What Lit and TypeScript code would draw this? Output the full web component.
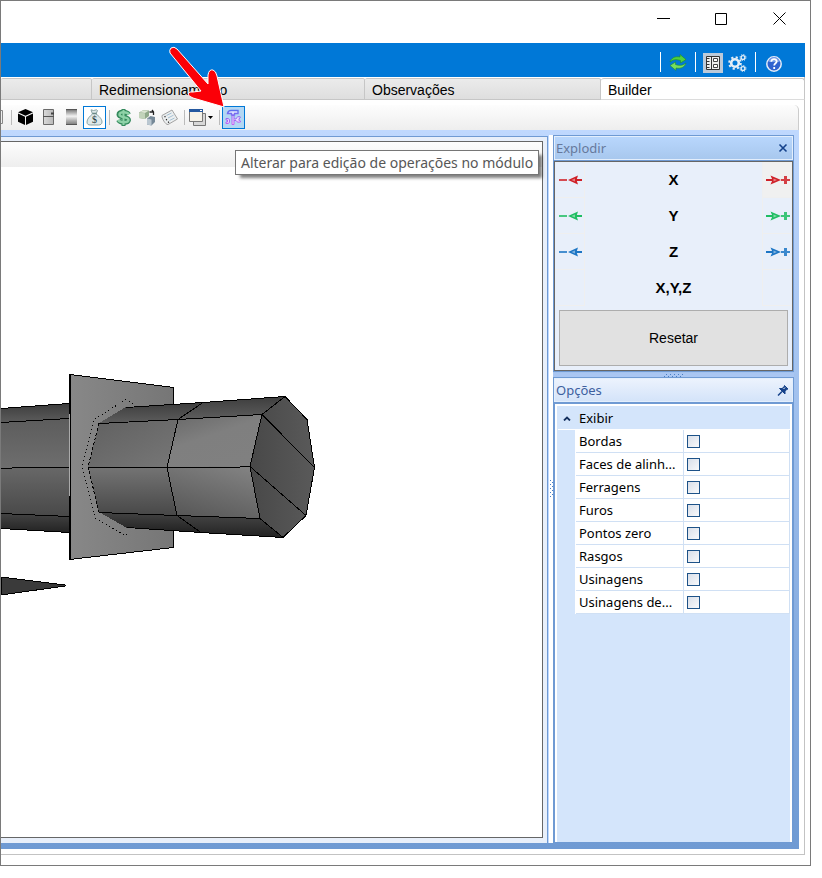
import { LitElement, html, css, svg } from "lit";
import { customElement } from "lit/decorators.js";

/** 3D preview of the module: a faceted bar passing through a plate. */
@customElement("model-view")
class ModelView extends LitElement {
  static styles = css`
    :host {
      display: block;
    }
    svg {
      display: block;
    }
    .edge {
      fill: none;
      stroke: #000;
    }
    .hidden {
      fill: none;
      stroke: #000;
      stroke-dasharray: 1 3;
    }
  `;

  render() {
    return html`
      <svg width="330" height="240" viewBox="1 367 330 240" role="img" aria-label="Modelo 3D" shape-rendering="crispEdges">
        <defs>
          <linearGradient id="plate"><stop offset="0" stop-color="#888" /><stop offset="1" stop-color="#767676" /></linearGradient>
          <linearGradient id="dark" x1="0" y1="0" x2="0" y2="1"><stop offset="0" stop-color="#3c3c3c" /><stop offset="1" stop-color="#5d5d5d" /></linearGradient>
          <linearGradient id="under" x1="0" y1="0" x2="0" y2="1"><stop offset="0" stop-color="#444" /><stop offset="1" stop-color="#222" /></linearGradient>
          <linearGradient id="rear" x1="0" y1="0" x2="0" y2="1"><stop offset="0" stop-color="#5c5c5c" /><stop offset="1" stop-color="#6e6e6e" /></linearGradient>
          <linearGradient id="rearLow" x1="0" y1="0" x2="0" y2="1"><stop offset="0" stop-color="#686868" /><stop offset="1" stop-color="#484848" /></linearGradient>
          <linearGradient id="upper" x1="0" y1="0" x2="1" y2="1"><stop offset="0" stop-color="#606060" /><stop offset="1" stop-color="#777" /></linearGradient>
          <linearGradient id="lower" x1="0" y1="0" x2="0" y2="1"><stop offset="0" stop-color="#747474" /><stop offset="1" stop-color="#484848" /></linearGradient>
          <linearGradient id="tipUp" x1="0" y1="0" x2="0.6" y2="1"><stop offset="0" stop-color="#676767" /><stop offset="0.5" stop-color="#7f7f7f" /><stop offset="1" stop-color="#808080" /></linearGradient>
          <linearGradient id="tipLow" x1="0.3" y1="1" x2="0.8" y2="0"><stop offset="0" stop-color="#585858" /><stop offset="1" stop-color="#828282" /></linearGradient>
          <linearGradient id="face"><stop offset="0" stop-color="#484848" /><stop offset="1" stop-color="#5a5a5a" /></linearGradient>
        </defs>
        <polygon fill="url(#dark)" points="1,408 69,403 69,418 1,423" />
        <polygon fill="url(#rear)" points="1,423 69,418 69,468 1,468" />
        <polygon fill="url(#rearLow)" points="1,468 69,467 69,517 1,513" />
        <polygon fill="url(#under)" points="1,513 69,517 69,533 1,528" />
        <path class="edge" d="M1 408.5 69 403.5M1 422.5 69 418.5M1 468.5 23 467.5H69M1 513.5 69 516.5M1 528.5 69 532.5" />
        <polygon fill="url(#plate)" points="70,374 173,387 173,548 69,560" />
        <path class="edge" d="M69.5 560V374.5L173.5 387.5V547.5L69.5 559.5" />
        <path d="M69 374h2v186h-2z" />
        <path d="M69 414h1v82h-1z" fill="#aaa" />
        <polygon fill="url(#dark)" points="126,407 203,402 178,419 99,423" />
        <polygon fill="url(#dark)" points="203,402 285,396 262,414 178,419" />
        <polygon fill="url(#upper)" points="99,423 178,419 167,467 88,467" />
        <polygon fill="url(#lower)" points="88,467 167,467 177,515 99,512" />
        <polygon fill="url(#tipUp)" points="178,419 262,414 250,466 167,467" />
        <polygon fill="url(#tipLow)" points="167,467 250,466 260,519 177,515" />
        <polygon fill="url(#under)" points="99,512 177,515 201,532 127,528" />
        <polygon fill="url(#under)" points="177,515 260,519 283,537 201,532" />
        <polygon fill="url(#face)" points="285,396 307,419 315,467 306,515 283,537 260,519 250,466 262,414" />
        <path class="edge" d="M126 407.5 203 402.5 285 396.5 307 419.5 314.5 467.5 306 515.5 283 537.5 201 532.5 127 527.5M99 423.5 178 419.5 262 414.5M88 467.5H230L250 466.5M99 512.5 177 515.5 260 518.5M203 402.5 178 419.5 167 467.5 177 515.5 201 532.5M285 396.5 262 414.5 250 466.5 260 518.5 283 537.5M262 414.5 314.5 467.5M250 466.5 306 515.5" />
        <path class="hidden" d="M133 404 126 399.5 94.5 419 82 467 95 518 125 535.5 133 530" />
        <path class="edge" stroke-dasharray="3 2" d="M99 423 88 467 99 512" />
        <polygon points="1,577 65,585 65,586 1,595" fill="#3a3a3a" stroke="#000" />
      </svg>
    `;
  }
}

/** Arrow used by the explode controls; points left for "in", right for "out". */
@customElement("explode-icon")
class ExplodeIcon extends LitElement {
  static properties = { out: { type: Boolean }, tone: {} };
  declare out: boolean;
  declare tone: string;

  static styles = css`
    :host {
      display: block;
      width: 25px;
      height: 13px;
    }
    svg {
      display: block;
    }
    .red {
      color: #cf2027;
    }
    .green {
      color: #1fbd62;
    }
    .blue {
      color: #1c75c4;
    }
  `;

  render() {
    const shape = this.out
      ? svg`<path d="M1 6h7v2H1z" /><path d="M5.500 2.500 16 7 5.500 11.500 7.500 7z" /><path d="M16 6h3V3h3v3h3v2h-3v3h-3V8h-3z" opacity=".85" /><path d="M8.500 5.500 12 7 8.500 8.500z" fill="#fff" opacity=".45" />`
      : svg`<path d="M2 6h8v2H2z" opacity=".8" /><path d="M18 6h7v2h-7z" /><path d="M21 2.500 11 7l10 4.500L19.500 7z" /><path d="M18 5.500 14.500 7 18 8.500z" fill="#fff" opacity=".45" />`;
    return html`<svg class=${this.tone} width="25" height="13" viewBox="0 0 25 13" fill="currentColor">${shape}</svg>`;
  }
}

const ICONS = {
  cube: svg`<path d="M8.500 0 16 3.300 8.500 6.800 1 3.300z" /><path d="M1 4.500 8 7.800V16L1 12.800z" /><path d="M16 4.500 9 7.800V16L16 12.800z" />`,
  cabinet: svg`<defs><linearGradient id="door"><stop offset="0" stop-color="#dadada" /><stop offset="1" stop-color="#b8b8b8" /></linearGradient></defs><path d="M3.500.5h10v15h-10z" fill="url(#door)" stroke="#6a6a6a" /><path d="M3 7.500h11" stroke="#555" /><path d="M11 4.500h3" stroke="#444" stroke-width="2" />`,
  metal: svg`<defs><linearGradient id="metal" x1="0" y1="0" x2="0" y2="1"><stop offset="0" stop-color="#666" /><stop offset=".15" stop-color="#999" /><stop offset=".45" stop-color="#f2f2f2" /><stop offset=".75" stop-color="#aaa" /><stop offset="1" stop-color="#777" /></linearGradient></defs><path d="M3 0h11v16H3z" fill="url(#metal)" /><path d="M3 .5h11M3 15.500h11" stroke="#555" />`,
  bag: svg`<path d="M5 .8 7.500 1.500 10.500.8 11.500 1.500 10 5C13 7 16 10 16 13c0 2-1.500 3-3.500 3H4.500C2 16 1 15 1 13 1 10 3.500 7.500 6.500 5z" fill="#dfe9ea" stroke="#8aa3a3" /><path d="M6.500 4.500h4" stroke="#6a8a86" stroke-width="1.500" /><text x="8.500" y="14" text-anchor="middle" font-family="Liberation Serif, serif" font-size="10" fill="#243c3a">$</text>`,
  dollar: svg`<path d="M13.500 5.500C12 2.500 4 2.500 4 5.800 4 8.800 13.500 7.500 13.500 11 13 14.500 5 14 3.500 11" fill="none" stroke="#348a5d" stroke-width="5" /><path d="M8.500 0v17" stroke="#348a5d" stroke-width="4" /><path d="M14 5.500C12 2.500 4.500 2.500 4.500 5.800 4.500 8.800 13.500 7.500 13.500 11 13 14 5.500 14 3 11" fill="none" stroke="#8ed2a7" stroke-width="2.400" /><path d="M8.500 1v15" stroke="#8ed2a7" stroke-width="2" />`,
  parts: svg`<path d="M1 3.500 5.500 1 11 1.500V7l-4 3-6-1z" fill="#90a98b" /><path d="M1 3.500 7 4.200V10L1 9z" fill="#c2d3ba" /><path d="M1.500 3.300 5.500 1.300 10.500 1.700 7 4z" fill="#dce6d3" /><path d="M9 9.500 12.500 7 17 8v5l-3.500 3.500L9 15.500z" fill="#768998" /><path d="M9 9.500l4.500 1v6L9 15.500z" fill="#bac7d1" /><path d="M11.500 3h4M14 1l1.500 2v3" fill="none" stroke="#222" stroke-width="1.300" />`,
  list: svg`<path d="M1 6.500 11 1 16.500 10 7 15.500C4.500 16 .5 9 1 6.500z" fill="#eceff0" stroke="#a2a2a2" /><path d="M5.500 6.500 10.500 4M7 9 12.500 6.200M8.500 11.500 13.500 9" stroke="#a5c0d3" /><path d="M3.500 8 4.500 7.400M5 11l1-.6M7 13.500l1-.6" stroke="#222" stroke-width="1.300" />`,
  windows: svg`<path d="M4.500 4.500h12v12h-12z" fill="#d8d8d8" stroke="#777" /><path d="M.5.5h13v12H.5z" fill="#f5f2e9" stroke="#777" /><path d="M0 0h14v3H0z" fill="#24589f" /><path d="M11 1.500h2" stroke="#fff" />`,
  tools: svg`<defs><linearGradient id="violet" x1="0" y1="0" x2="0" y2="17" gradientUnits="userSpaceOnUse"><stop offset="0" stop-color="#5471ee" /><stop offset="1" stop-color="#d05ff5" /></linearGradient></defs><g fill="none" stroke="url(#violet)"><path d="M2.500 4.500C3 2 4 1.500 6 1.500h7v3H9.500V6h-3V4.500z" fill="#e3e8ff" stroke-width="1.400" /><path d="M7 6.500v9h2v-9z" fill="#efd8ff" /><path d="M1 9.500h2l1.500 1v3l-1.500 1H1v-1.500h1.500v-2H1z" fill="#ead9ff" /><path d="M9 10h2c.5-2 2.500-3 4.500-2l-1.500 2v1.500l2 1c-2 1.500-4.500.5-5-1H9" fill="#ead9ff" /></g>`,
  refresh: svg`<path d="M2 9C3 5 7 3 12 4V1.500L18 6.500 12.500 10V7.500C8 6 5 6.500 2 9z" fill="#4fd13f" stroke="#1e8a2c" stroke-width=".6" /><path d="M18 10c-1 4-5 6-10 5v2.500L2 12.500 7.500 9v2.500C12 13 15 12.500 18 10z" fill="#76df5d" stroke="#1e8a2c" stroke-width=".6" />`,
  panel: svg`<path d="M3.500 3.500h13v13h-13z" fill="#eee" stroke="#333" /><path d="M8.500 3v14" stroke="#333" /><path d="M4 5.500h2.500M4 8.500h2.500M4 11.500h2.500M4 14.500h2.500" stroke="#333" /><path d="M10.500 5.500h4v3h-4zM10.500 11.500h4v3h-4z" fill="#fff" stroke="#444" />`,
  gears: svg`<g fill="none" stroke="#e4eef7"><circle cx="7" cy="10" r="3.800" stroke-width="2.600" /><circle cx="7" cy="10" r="5.800" stroke-width="2" stroke-dasharray="2.200 2.350" /><circle cx="15" cy="4.500" r="1.900" stroke-width="1.400" /><circle cx="15" cy="4.500" r="3" stroke-width="1" stroke-dasharray="1.200 1.150" /><circle cx="15" cy="15.500" r="1.900" stroke-width="1.400" /><circle cx="15" cy="15.500" r="3" stroke-width="1" stroke-dasharray="1.200 1.150" /></g>`,
  help: svg`<circle cx="11" cy="11" r="7.200" fill="#2f62cf" stroke="#e5edf8" stroke-width="1.500" /><path d="M5.500 9a5.500 5 0 0 1 11 0z" fill="#719be8" /><path d="M8.300 8.800c0-3.800 5.600-3.400 5.400-.3-.1 1.700-2.500 1.800-2.500 3.900M11.200 14v2" fill="none" stroke="#fff" stroke-width="1.800" />`,
  pin: svg`<path d="M7.500 1.500 11 5 9.500 5.500 8 7.500V10L2.500 4.500H5L7 3z" fill="#15428b" stroke="#15428b" /><path d="M1 11.500l4-4" stroke="#15428b" stroke-width="1.500" /><path d="M6.500 5 8 3.500" stroke="#fff" />`,
};

@customElement("app-root")
class AppRoot extends LitElement {
  static styles = css`
    :host {
      display: block;
      box-sizing: border-box;
      height: 100vh;
      padding: 0 11px 12px 0;
      background: #fff;
      color: #000;
      font: 14px/16px "Liberation Sans", Arial, sans-serif;
    }
    * {
      box-sizing: border-box;
    }
    button {
      display: flex;
      align-items: center;
      justify-content: center;
      margin: 0;
      padding: 0;
      border: 0;
      border-radius: 0;
      background: none;
      color: inherit;
      font: inherit;
    }
    svg {
      display: block;
      flex: none;
    }
    .window {
      display: flex;
      flex-direction: column;
      height: 100%;
      border: 1px solid #7a7a7a;
      overflow: hidden;
    }
    .titlebar {
      display: flex;
      flex: none;
      justify-content: flex-end;
      height: 42px;
      padding-right: 2px;
    }
    .titlebar button {
      width: 58px;
      height: 35px;
    }
    .titlebar path {
      fill: none;
      stroke: #000;
    }
    .band {
      display: flex;
      flex: none;
      align-items: center;
      justify-content: flex-end;
      gap: 7px;
      height: 34px;
      margin-right: 5px;
      padding: 6px 22px 0 0;
      background: #0078d7;
    }
    .band .rule {
      width: 1px;
      height: 20px;
      margin-bottom: 2px;
      background: #fff;
    }
    .pair {
      display: flex;
      gap: 5px;
    }
    .pressed {
      background: #bccad9;
    }
    .page {
      display: flex;
      flex: 1;
      flex-direction: column;
      min-height: 0;
      margin: 0 5px 10px 0;
      padding: 0 5px 5px 0;
      border: solid #c3c3c3;
      border-width: 0 1px 1px 0;
    }
    .tabs {
      display: grid;
      flex: none;
      grid-template-columns: 91fr 273fr 236fr 204fr;
      height: 23px;
      margin: 0 -6px 5px 0;
      padding-top: 1px;
    }
    .tabs button {
      justify-content: flex-start;
      padding: 2px 0 0 7px;
      border: 1px solid #c6c6c6;
      border-left-width: 0;
      background: linear-gradient(#ebebeb, #dedede);
      border-radius: 2px 2px 0 0;
    }
    .tabs button.selected {
      border-color: #c6c6c6 #c6c6c6 #dcdcdc;
      border-radius: 3px 3px 0 0;
      background: #fff;
    }
    .toolbar {
      display: flex;
      flex: none;
      align-items: center;
      height: 25px;
      border-right: 1px solid #ccc;
      border-radius: 0 5px 0 0;
      background: linear-gradient(#fdfdfd, #eeeeee);
    }
    .toolbar button {
      width: 23px;
      height: 23px;
    }
    .toolbar .clipped {
      width: 7px;
      justify-content: flex-start;
    }
    .toolbar .menu {
      width: 28px;
      gap: 2px;
      margin-right: 1px;
    }
    .toolbar .rule {
      width: 1px;
      height: 15px;
      margin: 0 2px 0 3px;
      background: #bbb;
    }
    .toolbar .boxed {
      border: 1px solid #0078d7;
      background: #fff;
    }
    .toolbar .active {
      border: 1px solid #0078d7;
      background: #b3d7f3;
    }
    .anchor {
      position: relative;
      z-index: 1;
    }
    .pointer {
      position: absolute;
      right: 18px;
      bottom: 20px;
      pointer-events: none;
    }
    .tooltip {
      position: absolute;
      top: 44px;
      left: 13px;
      width: max-content;
      padding: 0 5px;
      border: 1px solid #767676;
      background: #fff;
      box-shadow: 4px 4px 3px -1px rgba(0, 0, 0, 0.5);
      color: #575757;
      font: 14px/23px "Noto Sans", "Open Sans", sans-serif;
    }
    .dock {
      display: flex;
      flex: 1;
      min-height: 0;
      padding: 5px 5px 6px 0;
      background: linear-gradient(#bfd8fe, #6f9ad3);
    }
    .document {
      display: flex;
      flex: 1;
      min-width: 0;
      margin-top: 1px;
      padding: 4px 4px 5px 0;
      border: solid #6f9ad3;
      border-width: 1px 1px 0 0;
      background: #e8effa;
    }
    .canvas {
      flex: 1;
      overflow: hidden;
      border: solid #666;
      border-width: 1px 1px 1px 0;
      background: #fff;
    }
    .viewbar {
      height: 25px;
      margin-bottom: 200px;
      background: linear-gradient(#fdfdfd, #eeeeee);
    }
    .splitter {
      display: flex;
      align-items: center;
      justify-content: center;
      width: 5px;
      border-left: 1px solid #bfd8fe;
      background: #fff;
    }
    .side {
      display: flex;
      flex-direction: column;
      width: 241px;
    }
    .caption {
      display: flex;
      flex: none;
      align-items: center;
      justify-content: space-between;
      height: 26px;
      margin: 0;
      padding: 0 4px 0 2px;
      border: 1px solid #6f9ad3;
      box-shadow: inset 0 0 0 1px #e3eefc;
      background: linear-gradient(#b9d7fd, #a7c7ed);
      color: #66799c;
      font: 13px/18px "Noto Sans", "Open Sans", sans-serif;
    }
    .caption.active {
      background: linear-gradient(#edf3fd, #d3e3f9);
      color: #3d5f9f;
    }
    .caption button {
      width: 12px;
      height: 12px;
    }
    .explode {
      display: flex;
      flex: none;
      flex-direction: column;
      gap: 4px;
      padding-bottom: 4px;
      outline: 1px solid #6f9ad3;
      border: 1px solid #666;
      margin: 0 1px 2px;
      background: #e8effa;
    }
    .axis {
      display: grid;
      grid-template-columns: 30px 1fr 30px;
      align-items: center;
      height: 36px;
      font-size: 15px;
      font-weight: bold;
      text-align: center;
    }
    .axis button {
      width: 30px;
      height: 36px;
      border: solid #efefef;
      border-width: 0 1px 1px 0;
    }
    .axis button:last-child {
      border-width: 0 0 1px 1px;
    }
    .axis button.hot {
      background: #f0f0f0;
    }
    .reset {
      height: 56px;
      margin: 0 4px;
      border: 1px solid #adadad;
      background: #e1e1e1;
    }
    .divider {
      display: flex;
      flex: none;
      align-items: center;
      justify-content: center;
      height: 4px;
      background: #a9c6f2;
    }
    .options {
      flex: 1;
      min-height: 0;
      overflow: hidden;
      border: solid #6f9ad3;
      border-width: 1px 2px;
      padding: 2px 2px 0;
      background: #fff;
    }
    .sheet {
      height: 100%;
      padding: 1px 0 0 1px;
      background: #d4e5fb;
    }
    table {
      width: 100%;
      border-collapse: separate;
      border-spacing: 0;
      table-layout: fixed;
      font: 13px/18px "Noto Sans", "Open Sans", sans-serif;
    }
    .indent {
      width: 18px;
    }
    .name {
      width: 108px;
    }
    th,
    td {
      height: 23px;
      padding: 0;
      font-weight: normal;
      text-align: left;
      white-space: nowrap;
    }
    tbody th,
    tbody .value {
      padding-left: 3px;
      border: solid #d0e0f4;
      border-width: 0 1px 1px 0;
      background: #fff;
    }
    tbody .gutter {
      border-right: 1px solid #fff;
    }
    thead th {
      border-bottom: 1px solid #fff;
    }
    thead .group {
      padding-left: 3px;
    }
    thead button {
      width: 18px;
      height: 18px;
    }
    input {
      display: block;
      width: 13px;
      height: 13px;
      margin: 0;
      border: 1px solid #1d5288;
      background: linear-gradient(135deg, #d9dfe9, #f8f9fb);
      appearance: none;
    }
    input:checked {
      background: #1d5288;
    }
  `;

  private icon(name: keyof typeof ICONS, size = 17) {
    return html`<svg width=${size} height=${size} viewBox="0 0 ${size} ${size}">${ICONS[name]}</svg>`;
  }

  private axis(label: string, tone: string) {
    return html`
      <div class="axis">
        <button aria-label="Aproximar ${label}">${tone ? html`<explode-icon .tone=${tone}></explode-icon>` : ""}</button>
        <span>${label}</span>
        <button class=${tone === "red" ? "hot" : ""} aria-label="Afastar ${label}">
          ${tone ? html`<explode-icon .tone=${tone} .out=${true}></explode-icon>` : ""}
        </button>
      </div>
    `;
  }

  private option(label: string, i: number) {
    return html`
      <tr>
        <td class="gutter"></td>
        <th scope="row"><label for="option-${i}">${label}</label></th>
        <td class="value"><input type="checkbox" id="option-${i}" /></td>
      </tr>
    `;
  }

  render() {
    const options = ["Bordas", "Faces de alinh...", "Ferragens", "Furos", "Pontos zero", "Rasgos", "Usinagens", "Usinagens de..."];
    return html`
      <div class="window">
        <header class="titlebar">
          <button aria-label="Minimizar"><svg width="13" height="13"><path d="M0 6.500h13" /></svg></button>
          <button aria-label="Maximizar"><svg width="13" height="13"><path d="M.5 1.500h11v11H.5z" /></svg></button>
          <button aria-label="Fechar"><svg width="13" height="13"><path d="M.5.5l12 12M12.500.5l-12 12" /></svg></button>
        </header>
        <div class="band">
          <span class="rule"></span>
          <button aria-label="Atualizar">${this.icon("refresh", 20)}</button>
          <span class="rule"></span>
          <div class="pair">
            <button class="pressed" aria-label="Painel">${this.icon("panel", 20)}</button>
            <button aria-label="Configurações">${this.icon("gears", 20)}</button>
          </div>
          <span class="rule"></span>
          <button aria-label="Ajuda">${this.icon("help", 20)}</button>
        </div>
        <main class="page">
          <nav class="tabs" role="tablist">
            <button role="tab" aria-label="Anterior"></button>
            <button role="tab">Redimensionamento</button>
            <button role="tab">Observações</button>
            <button role="tab" class="selected" aria-selected="true">Builder</button>
          </nav>
          <div class="toolbar" role="toolbar">
            <button class="clipped" aria-label="Vista">
              <svg width="3" height="15"><path d="M0 .5h1.500v13H0" fill="#eee" stroke="#888" /></svg>
            </button>
            <span class="rule"></span>
            <button aria-label="Sólido">${this.icon("cube")}</button>
            <button aria-label="Armário">${this.icon("cabinet")}</button>
            <button aria-label="Material">${this.icon("metal")}</button>
            <button class="boxed" aria-label="Orçamento">${this.icon("bag")}</button>
            <span class="rule"></span>
            <button aria-label="Preço">${this.icon("dollar")}</button>
            <button aria-label="Peças">${this.icon("parts")}</button>
            <button aria-label="Lista">${this.icon("list")}</button>
            <span class="rule"></span>
            <button class="menu" aria-label="Janelas">
              ${this.icon("windows")}
              <svg width="5" height="3"><path d="M0 0h5L2.500 3z" /></svg>
            </button>
            <span class="rule"></span>
            <div class="anchor">
              <button class="active" aria-describedby="tip">${this.icon("tools")}</button>
              <svg class="pointer" width="60" height="64" viewBox="166 45 60 64">
                <path
                  d="M170 48Q173 46 176 49L207 84 207 75Q208 69 212 70 215 71 216 76L223 107 192 98Q187 96 187 94 188 91 192 92L200 91 169 53Q168 50 170 48z"
                  fill="#fb0007" stroke="#fff" stroke-width="1" />
              </svg>
              <div class="tooltip" id="tip" role="tooltip">Alterar para edição de operações no módulo</div>
            </div>
          </div>
          <div class="dock">
            <section class="document">
              <div class="canvas">
                <div class="viewbar"></div>
                <model-view></model-view>
              </div>
            </section>
            <div class="splitter">
              <svg width="3" height="18"><path d="M.5 0v18M2.500 2v16" stroke="#4a7ec4" stroke-dasharray="1 3" /></svg>
            </div>
            <aside class="side">
              <h2 class="caption">
                Explodir
                <button aria-label="Fechar painel">
                  <svg width="10" height="10"><path d="M1.500 1.500l7 7M8.500 1.500l-7 7" stroke="#15428b" stroke-width="1.600" /></svg>
                </button>
              </h2>
              <div class="explode">
                <div>
                  ${this.axis("X", "red")} ${this.axis("Y", "green")} ${this.axis("Z", "blue")} ${this.axis("X,Y,Z", "")}
                </div>
                <button class="reset">Resetar</button>
              </div>
              <div class="divider">
                <svg width="20" height="3"><path d="M0 2.500h19M2 .5h18" stroke="#4a7ec4" stroke-dasharray="1 3" /></svg>
              </div>
              <h2 class="caption active">
                Opções
                <button aria-label="Fixar painel">${this.icon("pin", 12)}</button>
              </h2>
              <div class="options">
                <div class="sheet">
                  <table>
                    <colgroup><col class="indent" /><col class="name" /><col /></colgroup>
                    <thead>
                      <tr>
                        <th>
                          <button aria-label="Recolher" aria-expanded="true">
                            <svg width="8" height="5"><path d="M1 4.500l3-3 3 3" fill="none" stroke="#15305e" stroke-width="1.800" /></svg>
                          </button>
                        </th>
                        <th class="group" colspan="2">Exibir</th>
                      </tr>
                    </thead>
                    <tbody>
                      ${options.map((label, i) => this.option(label, i))}
                    </tbody>
                  </table>
                </div>
              </div>
            </aside>
          </div>
        </main>
      </div>
    `;
  }
}
